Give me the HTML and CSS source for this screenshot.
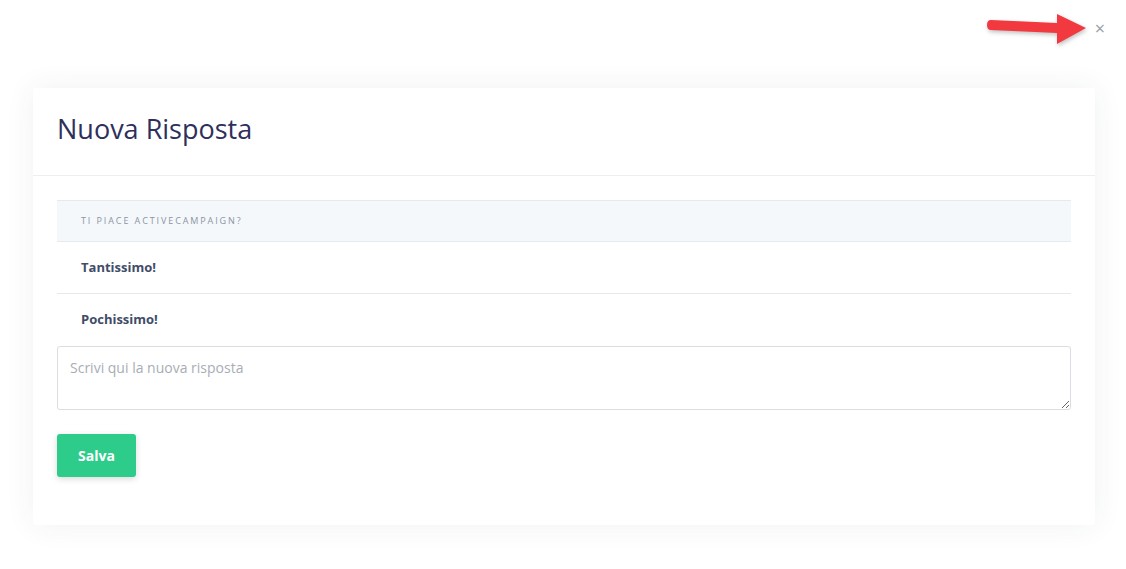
FILE: index.html
```html
<!DOCTYPE html>
<html lang="it">
<head>
    <meta charset="UTF-8">
    <meta name="viewport" content="width=device-width, initial-scale=1.0">
    <title>Nuova Risposta</title>
    <link rel="stylesheet" href="styles.css">
</head>
<body>
    <div class="overlay">
        <div class="topbar">
            <svg class="arrow" width="104" height="40" viewBox="0 0 104 40">
                <path d="M6 10 L72 13 L72 4 L101 18 L72 34 L72 23 L6 20 Q2 20 2 15 Q2 10 6 10 Z" fill="#f2393f"/>
            </svg>
            <span class="close">&times;</span>
        </div>

        <div class="modal">
            <div class="modal-header">
                <h1>Nuova Risposta</h1>
            </div>
            <div class="modal-body">
                <div class="answers">
                    <div class="answers-head">Ti piace ActiveCampaign?</div>
                    <div class="answer">Tantissimo!</div>
                    <div class="answer last">Pochissimo!</div>
                </div>
                <textarea class="new-answer" placeholder="Scrivi qui la nuova risposta"></textarea>
                <button class="btn-save">Salva</button>
            </div>
        </div>
    </div>
</body>
</html>
```

FILE: styles.css
```css
body {
    font-family: "Open Sans", Arial, sans-serif;
    margin: 0;
    padding: 0;
    background-color: #ffffff;
}

.overlay {
    padding: 0 31px 44px 33px;
}

.topbar {
    height: 88px;
    position: relative;
}

.arrow {
    position: absolute;
    right: 6px;
    top: 10px;
    filter: drop-shadow(1px 2px 2px rgba(0, 0, 0, 0.25));
}

.close {
    position: absolute;
    right: -10px;
    top: 18px;
    color: #9aa0a6;
    font-size: 18px;
    line-height: 20px;
}

.modal {
    background: #ffffff;
    border-radius: 4px;
    box-shadow: 0 0 30px rgba(40, 50, 80, 0.07);
    height: 437px;
}

.modal-header {
    box-sizing: border-box;
    height: 88px;
    border-bottom: 1px solid #eceef1;
    padding: 0 24px 6px 24px;
    display: flex;
    align-items: center;
}

.modal-header h1 {
    margin: 0;
    font-size: 27px;
    font-weight: 400;
    color: #2f2f5c;
}

.modal-body {
    padding: 24px 24px;
}

.answers {
    border-top: 1px solid #e6e9ed;
}

.answers-head {
    background-color: #f5f8fb;
    height: 40px;
    line-height: 40px;
    padding: 0 24px;
    font-size: 9px;
    letter-spacing: 1.9px;
    text-transform: uppercase;
    color: #8a94a3;
    border-bottom: 1px solid #e6e9ed;
}

.answer {
    height: 51px;
    line-height: 51px;
    padding: 0 24px;
    font-size: 13px;
    font-weight: 700;
    color: #414c68;
    border-bottom: 1px solid #e6e9ed;
}

.answer.last {
    border-bottom: none;
    height: 52px;
}

.new-answer {
    display: block;
    box-sizing: border-box;
    width: 100%;
    height: 64px;
    padding: 11px 12px;
    border: 1px solid #dcdde2;
    border-radius: 3px;
    font-family: "Open Sans", Arial, sans-serif;
    font-size: 14px;
    color: #333;
}

.new-answer::placeholder {
    color: #a8adb5;
}

.btn-save {
    margin-top: 24px;
    width: 79px;
    height: 43px;
    background-color: #2ecc8a;
    color: #ffffff;
    border: none;
    border-radius: 3px;
    font-family: "Open Sans", Arial, sans-serif;
    font-size: 14px;
    font-weight: 700;
    box-shadow: 0 2px 6px rgba(0, 0, 0, 0.15);
}
```
